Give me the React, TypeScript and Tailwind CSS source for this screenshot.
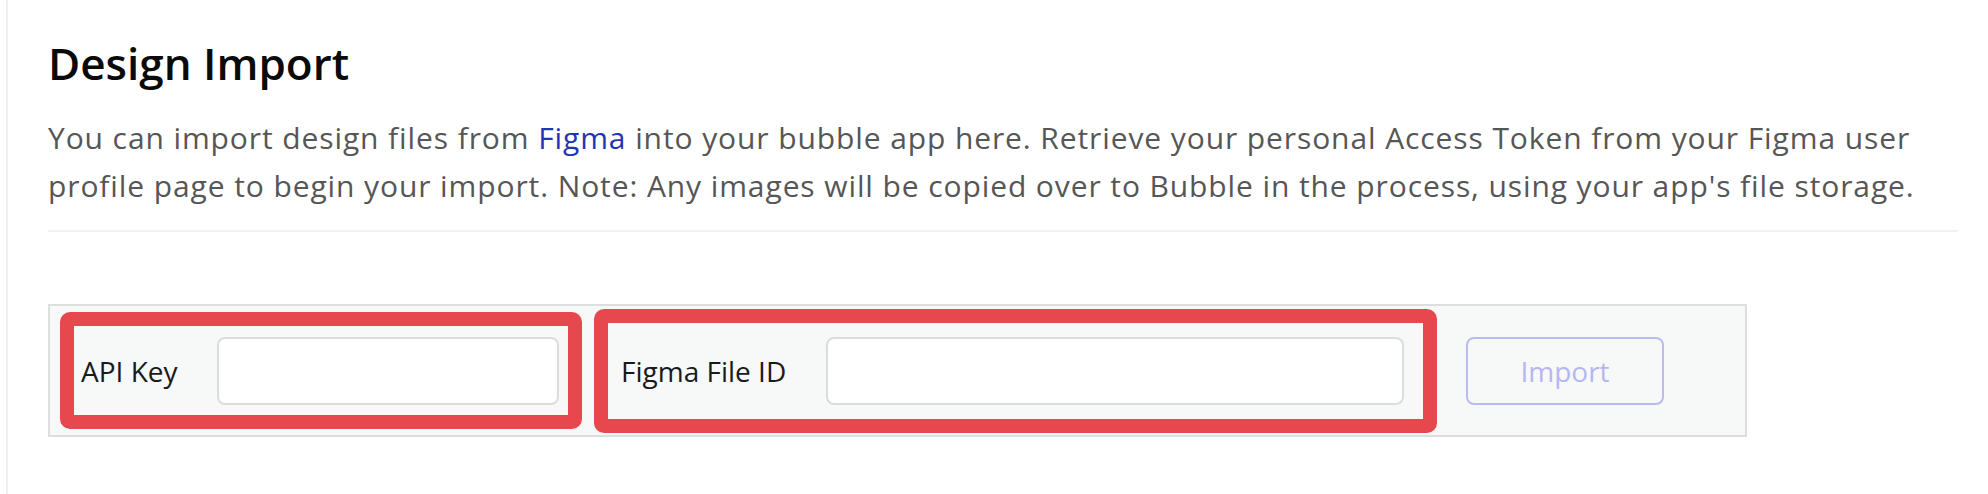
export default function App() {
  return (
    <div className="w-full h-[494px] bg-white pl-[6px] font-['Open_Sans',sans-serif]">
      <div className="h-full border-l-2 border-[#efefef] pl-[40px] pr-[30px]">
        <h1 className="pt-[33px] text-[44px] leading-[60px] font-semibold text-[#0a0a0a]">Design Import</h1>
        <p className="mt-[21px] text-[30px] leading-[48px] tracking-[0.9px] text-[#565656]">
          You can import design files from <span className="text-[#1f35b1]">Figma</span> into your bubble app here.
          Retrieve your personal Access Token from your Figma user profile page to begin your import. Note: Any
          images will be copied over to Bubble in the process, using your app's file storage.
        </p>
        <div className="mt-[20px] h-[2px] bg-[#f1f1f1]" />

        {/* import form */}
        <div className="mt-[72px] w-[1699px] h-[133px] flex items-center border-2 border-[#dedede] bg-[#f7f8f8] pl-[10px]">
          <div className="flex items-center w-[522px] h-[117px] border-[14px] border-[#e6484e] rounded-[10px] pl-[7px]">
            <span className="w-[136px] text-[28px] text-[#1a1a1a]">API Key</span>
            <input className="w-[342px] h-[68px] bg-white border-2 border-[#dcdcdc] rounded-[8px]" />
          </div>
          <div className="ml-[12px] flex items-center w-[843px] h-[124px] border-[14px] border-[#e6484e] rounded-[10px] pl-[13px]">
            <span className="w-[205px] text-[28px] text-[#1a1a1a]">Figma File ID</span>
            <input className="w-[578px] h-[68px] bg-white border-2 border-[#dcdcdc] rounded-[8px]" />
          </div>
          <button className="ml-[29px] w-[198px] h-[68px] border-2 border-[#bbbbf2] rounded-[8px] text-[28px] text-[#b6b6f0]">
            Import
          </button>
        </div>
      </div>
    </div>
  );
}
